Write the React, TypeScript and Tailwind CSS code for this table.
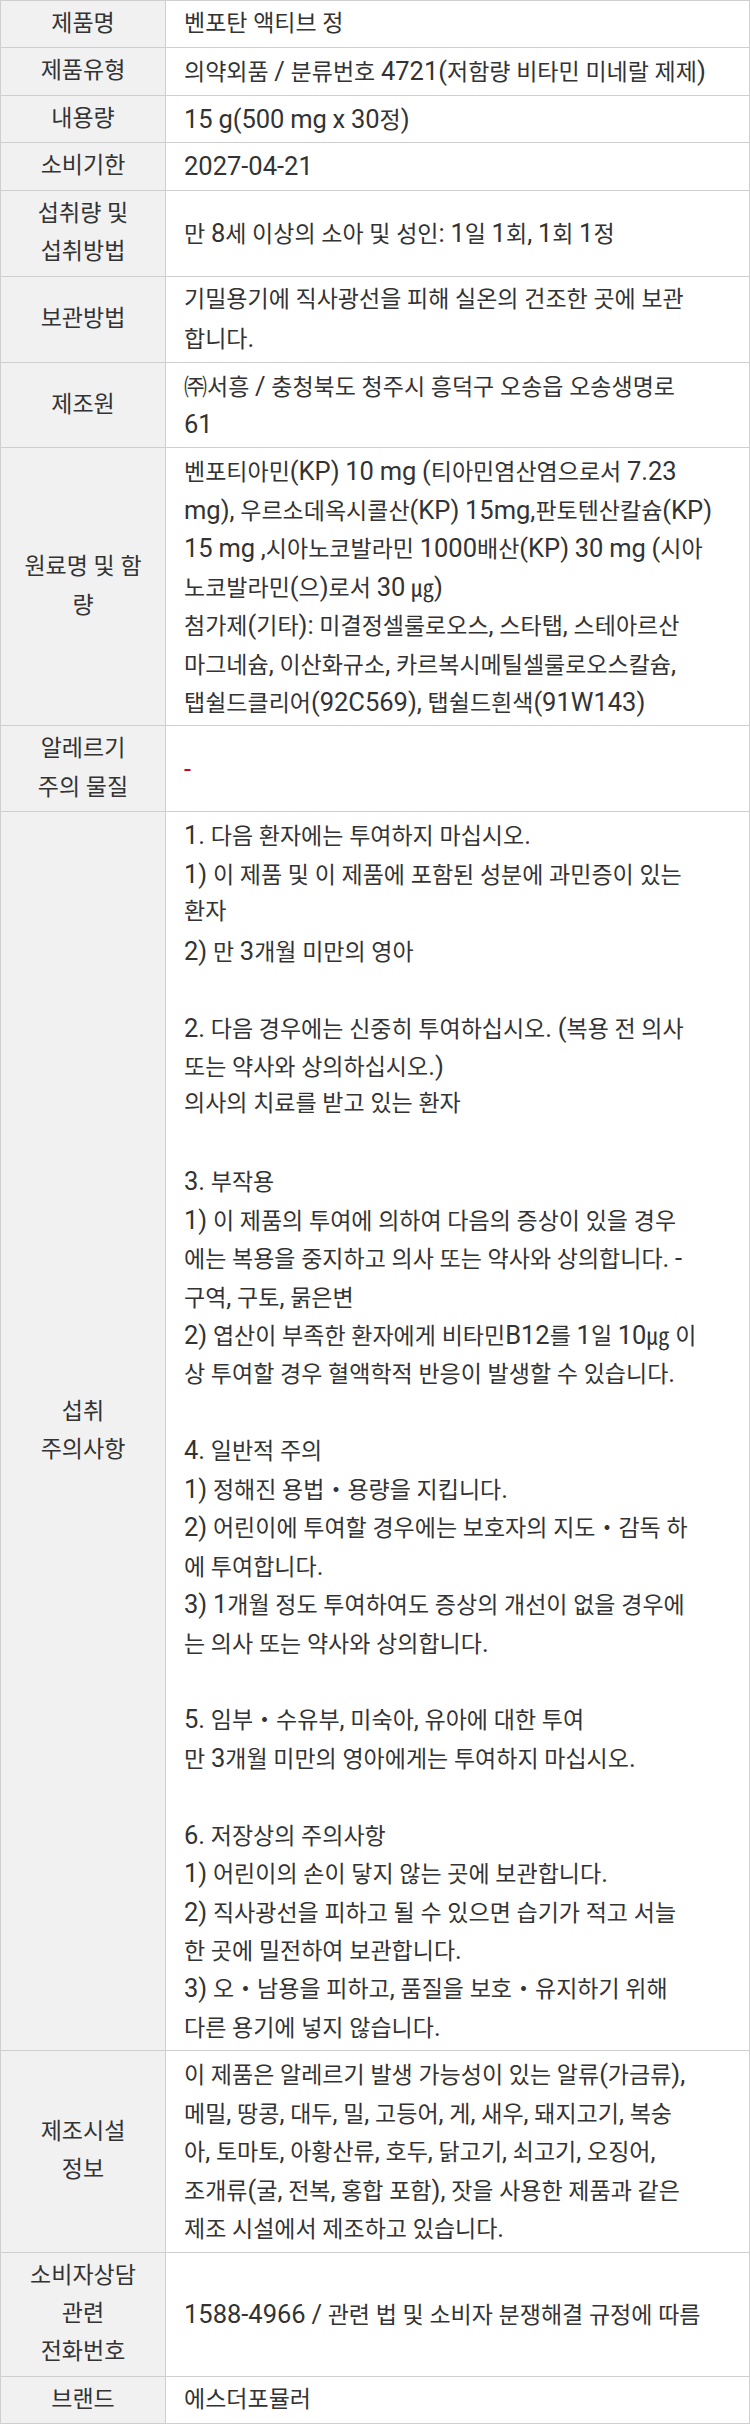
import React from "react";

type Row = { label: string[]; value: string[]; red?: boolean };

const rows: Row[] = [
  { label: ["제품명"], value: ["벤포탄 액티브 정"] },
  { label: ["제품유형"], value: ["의약외품 / 분류번호 4721(저함량 비타민 미네랄 제제)"] },
  { label: ["내용량"], value: ["15 g(500 mg x 30정)"] },
  { label: ["소비기한"], value: ["2027-04-21"] },
  { label: ["섭취량 및", "섭취방법"], value: ["만 8세 이상의 소아 및 성인: 1일 1회, 1회 1정"] },
  { label: ["보관방법"], value: ["기밀용기에 직사광선을 피해 실온의 건조한 곳에 보관", "합니다."] },
  { label: ["제조원"], value: ["㈜서흥 / 충청북도 청주시 흥덕구 오송읍 오송생명로", "61"] },
  {
    label: ["원료명 및 함", "량"],
    value: [
      "벤포티아민(KP) 10 mg (티아민염산염으로서 7.23",
      "mg), 우르소데옥시콜산(KP) 15mg,판토텐산칼슘(KP)",
      "15 mg ,시아노코발라민 1000배산(KP) 30 mg (시아",
      "노코발라민(으)로서 30 ㎍)",
      "첨가제(기타): 미결정셀룰로오스, 스타탭, 스테아르산",
      "마그네슘, 이산화규소, 카르복시메틸셀룰로오스칼슘,",
      "탭쉴드클리어(92C569), 탭쉴드흰색(91W143)",
    ],
  },
  { label: ["알레르기", "주의 물질"], value: ["-"], red: true },
  {
    label: ["섭취", "주의사항"],
    value: [
      "1. 다음 환자에는 투여하지 마십시오.",
      "1) 이 제품 및 이 제품에 포함된 성분에 과민증이 있는",
      "환자",
      "2) 만 3개월 미만의 영아",
      "",
      "2. 다음 경우에는 신중히 투여하십시오. (복용 전 의사",
      "또는 약사와 상의하십시오.)",
      "의사의 치료를 받고 있는 환자",
      "",
      "3. 부작용",
      "1) 이 제품의 투여에 의하여 다음의 증상이 있을 경우",
      "에는 복용을 중지하고 의사 또는 약사와 상의합니다. -",
      "구역, 구토, 묽은변",
      "2) 엽산이 부족한 환자에게 비타민B12를 1일 10㎍ 이",
      "상 투여할 경우 혈액학적 반응이 발생할 수 있습니다.",
      "",
      "4. 일반적 주의",
      "1) 정해진 용법・용량을 지킵니다.",
      "2) 어린이에 투여할 경우에는 보호자의 지도・감독 하",
      "에 투여합니다.",
      "3) 1개월 정도 투여하여도 증상의 개선이 없을 경우에",
      "는 의사 또는 약사와 상의합니다.",
      "",
      "5. 임부・수유부, 미숙아, 유아에 대한 투여",
      "만 3개월 미만의 영아에게는 투여하지 마십시오.",
      "",
      "6. 저장상의 주의사항",
      "1) 어린이의 손이 닿지 않는 곳에 보관합니다.",
      "2) 직사광선을 피하고 될 수 있으면 습기가 적고 서늘",
      "한 곳에 밀전하여 보관합니다.",
      "3) 오・남용을 피하고, 품질을 보호・유지하기 위해",
      "다른 용기에 넣지 않습니다.",
    ],
  },
  {
    label: ["제조시설", "정보"],
    value: [
      "이 제품은 알레르기 발생 가능성이 있는 알류(가금류),",
      "메밀, 땅콩, 대두, 밀, 고등어, 게, 새우, 돼지고기, 복숭",
      "아, 토마토, 아황산류, 호두, 닭고기, 쇠고기, 오징어,",
      "조개류(굴, 전복, 홍합 포함), 잣을 사용한 제품과 같은",
      "제조 시설에서 제조하고 있습니다.",
    ],
  },
  {
    label: ["소비자상담", "관련", "전화번호"],
    value: ["1588-4966 / 관련 법 및 소비자 분쟁해결 규정에 따름"],
  },
  { label: ["브랜드"], value: ["에스더포뮬러"] },
];

const HANGUL = /([\u1100-\u11FF\u3130-\u318F\u3200-\u33FF\uAC00-\uD7AF\u30FB ]+)/;

function Mixed({ text }: { text: string }) {
  const parts = text.split(HANGUL).filter((p) => p !== "");
  return (
    <>
      {parts.map((p, i) =>
        HANGUL.test(p) && /[^ ]/.test(p) ? (
          <span key={i}>{p}</span>
        ) : /^ +$/.test(p) ? (
          <span key={i}>{p}</span>
        ) : (
          <span key={i} className="text-[25.5px] leading-[38.44px]">
            {p}
          </span>
        )
      )}
    </>
  );
}

export default function App() {
  return (
    <div
      className="w-[750px] bg-white text-[23px] leading-[38.44px] text-[#333333]"
      style={{ fontFamily: 'Roboto, "Noto Sans CJK KR", "Noto Sans", sans-serif' }}
    >
      <div className="border-t border-l border-r border-[#cfcfcf]">
        {rows.map((r, i) => (
          <div key={i} className="flex border-b border-[#cfcfcf]">
            <div className="w-[165px] shrink-0 bg-[#f1f1f1] border-r border-[#cfcfcf] flex flex-col items-center justify-center py-1 text-center">
              {r.label.map((l, j) => (
                <div key={j} className="whitespace-nowrap">
                  {l}
                </div>
              ))}
            </div>
            <div className="flex-1 flex flex-col justify-center py-1 pl-[18px] pr-1">
              {r.value.map((v, j) => (
                <div
                  key={j}
                  className={
                    "whitespace-nowrap h-[38.44px] " + (r.red ? "text-[#d0021b]" : "")
                  }
                >
                  {v === "" ? "\u00a0" : <Mixed text={v} />}
                </div>
              ))}
            </div>
          </div>
        ))}
      </div>
    </div>
  );
}
